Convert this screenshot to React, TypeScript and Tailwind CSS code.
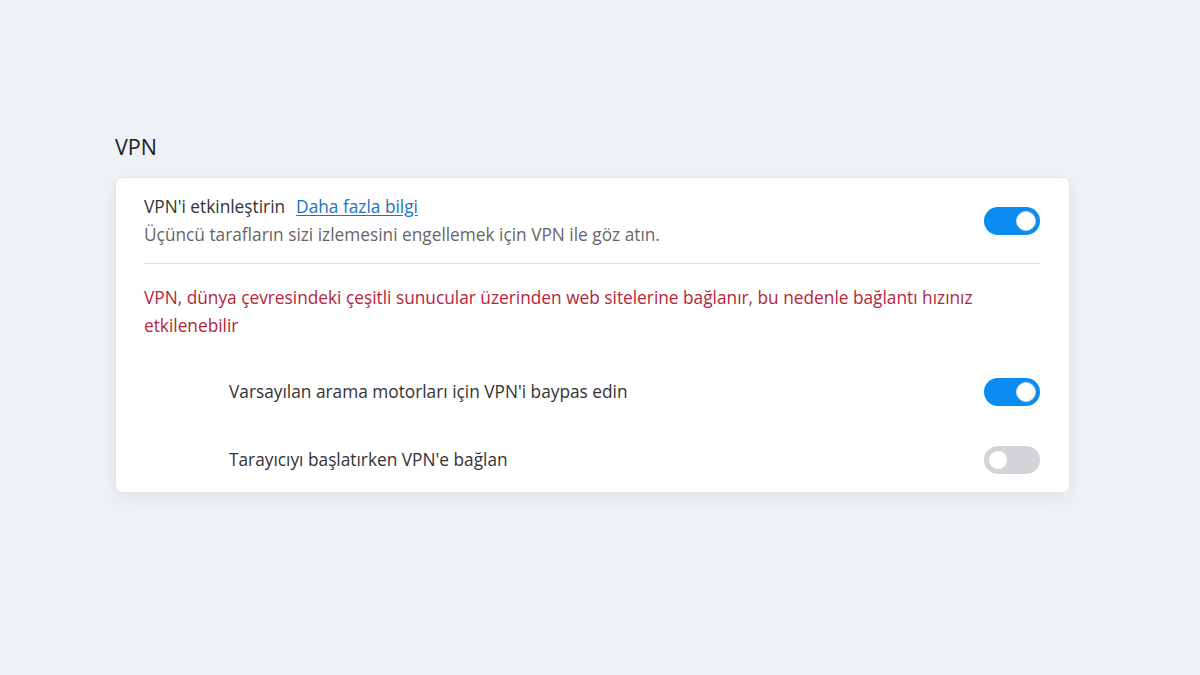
import React, { useState } from "react";

function Toggle({ on, onChange }: { on: boolean; onChange: () => void }) {
  return (
    <button
      onClick={onChange}
      className={
        "relative h-[28px] w-[56px] shrink-0 rounded-full " +
        (on ? "bg-[#0a8cf0]" : "bg-[#d3d3d8]")
      }
    >
      <span
        className={
          "absolute top-[4px] h-[20px] w-[20px] rounded-full border border-[#cfd6de] bg-white " +
          (on ? "left-[32px]" : "left-[4px]")
        }
      />
    </button>
  );
}

export default function App() {
  const [vpn, setVpn] = useState(true);
  const [bypass, setBypass] = useState(true);
  const [startup, setStartup] = useState(false);

  return (
    <div
      className="min-h-[675px] w-full bg-[#eef2f7] text-[#333]"
      style={{ fontFamily: '"Open Sans", "Noto Sans", sans-serif' }}
    >
      <div className="ml-[115px] w-[955px] pt-[132px]">
        <h2 className="mb-[15px] text-[21.5px] leading-[30px] text-[#222]">VPN</h2>

        <div className="rounded-[7px] border border-[#e1e5ea] bg-white pl-[28px] pr-[29px] shadow-[0_6px_18px_rgba(0,0,0,0.06)]">
          <div className="flex items-center justify-between pt-[15px] pb-[14px]">
            <div>
              <div className="flex items-center gap-[11px] text-[17.3px] leading-[28px]">
                <span>VPN'i etkinleştirin</span>
                <a href="#" className="text-[#1b75bb] underline underline-offset-2">
                  Daha fazla bilgi
                </a>
              </div>
              <div className="text-[17.3px] leading-[28px] text-[#666]">
                Üçüncü tarafların sizi izlemesini engellemek için VPN ile göz atın.
              </div>
            </div>
            <Toggle on={vpn} onChange={() => setVpn(!vpn)} />
          </div>

          <div className="h-px bg-[#dcdfe3]" />

          <p className="pt-[20px] pr-[60px] text-[17.3px] leading-[28px] text-[#b4253b]">
            VPN, dünya çevresindeki çeşitli sunucular üzerinden web sitelerine bağlanır, bu nedenle bağlantı hızınız etkilenebilir
          </p>

          <div className="flex items-center justify-between pt-[38px] pl-[85px]">
            <span className="text-[17.3px] leading-[28px]">
              Varsayılan arama motorları için VPN'i baypas edin
            </span>
            <Toggle on={bypass} onChange={() => setBypass(!bypass)} />
          </div>

          <div className="flex items-center justify-between pt-[40px] pb-[18px] pl-[85px]">
            <span className="text-[17.3px] leading-[28px]">
              Tarayıcıyı başlatırken VPN'e bağlan
            </span>
            <Toggle on={startup} onChange={() => setStartup(!startup)} />
          </div>
        </div>
      </div>
    </div>
  );
}
